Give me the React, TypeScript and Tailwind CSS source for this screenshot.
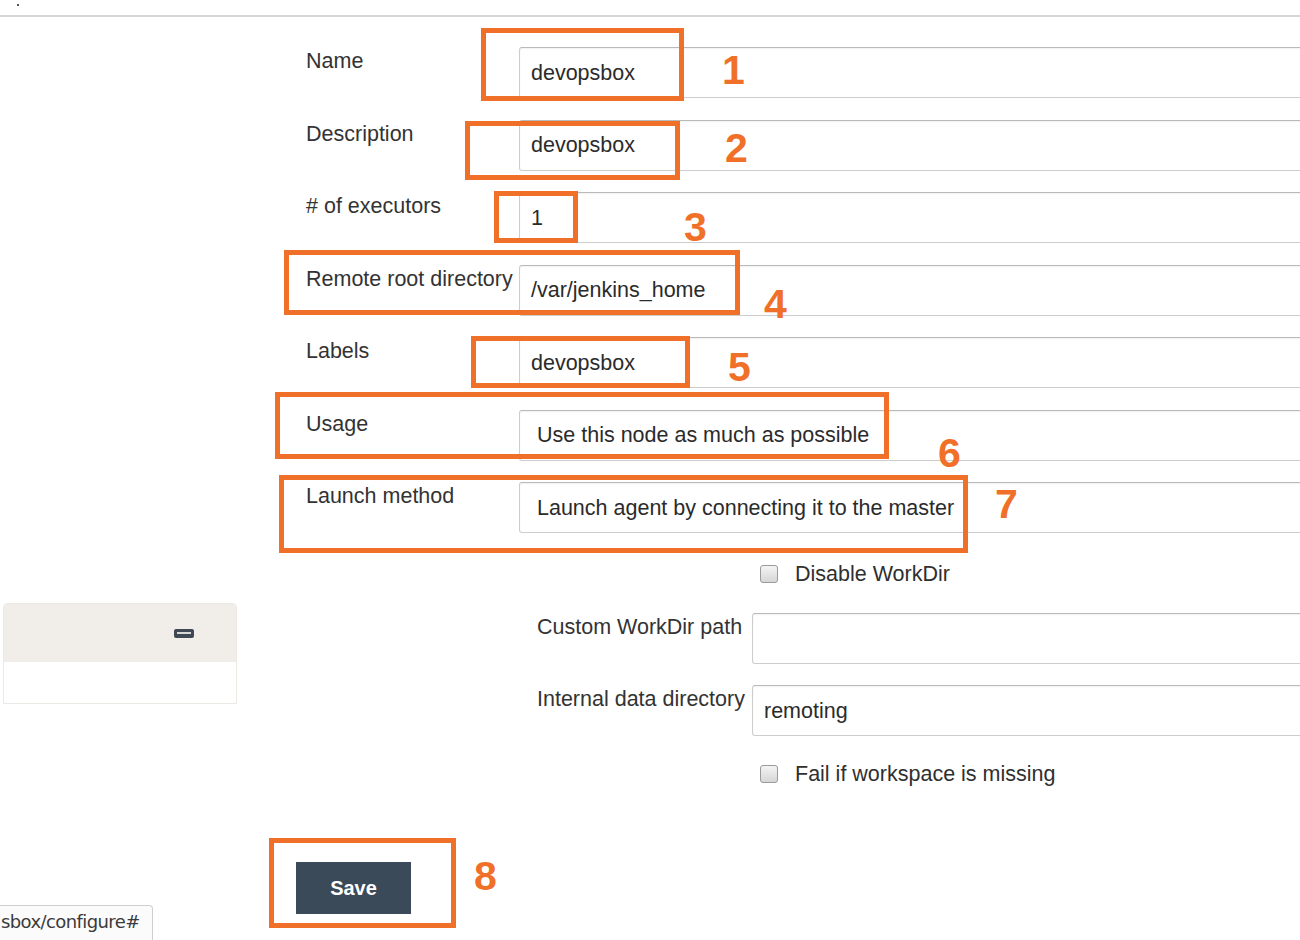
const FIELDS = [
  { label: "Name", value: "devopsbox" },
  { label: "Description", value: "devopsbox" },
  { label: "# of executors", value: "1" },
  { label: "Remote root directory", value: "/var/jenkins_home" },
  { label: "Labels", value: "devopsbox" },
  { label: "Usage", value: "Use this node as much as possible", select: true },
  { label: "Launch method", value: "Launch agent by connecting it to the master", select: true },
];

// annotation boxes drawn over the screenshot
const MARKS = [
  { n: "1", box: "left-[481px] top-[28px] w-[203px] h-[73px]", num: "left-[722px] top-[47px]" },
  { n: "2", box: "left-[465px] top-[121px] w-[215px] h-[59px]", num: "left-[725px] top-[125px]" },
  { n: "3", box: "left-[494px] top-[191px] w-[84px] h-[52px]", num: "left-[684px] top-[204px]" },
  { n: "4", box: "left-[284px] top-[250px] w-[456px] h-[65px]", num: "left-[764px] top-[281px]" },
  { n: "5", box: "left-[471px] top-[336px] w-[219px] h-[52px]", num: "left-[728px] top-[344px]" },
  { n: "6", box: "left-[275px] top-[392px] w-[614px] h-[67px]", num: "left-[938px] top-[430px]" },
  { n: "7", box: "left-[279px] top-[475px] w-[689px] h-[78px]", num: "left-[995px] top-[481px]" },
  { n: "8", box: "left-[269px] top-[838px] w-[187px] h-[90px]", num: "left-[474px] top-[853px]" },
];

function Field({ value, select }: { value: string; select?: boolean }) {
  return (
    <div
      className={
        "h-[51px] flex-1 flex items-center rounded-[3px] border border-[#cdcdcd] border-t-[#b9b9b9] bg-white shadow-[inset_0_1px_2px_rgba(0,0,0,0.06)] text-[#2b2b2b] " +
        (select ? "pl-[17px]" : "pl-[11px]")
      }
    >
      {value}
    </div>
  );
}

function Checkbox({ label }: { label: string }) {
  return (
    <div className="flex items-center gap-[17px] pl-[454px]">
      <div className="w-[18px] h-[18px] rounded-[3px] border border-[#9a9a9a] bg-gradient-to-b from-[#f4f4f4] to-[#d6d6d6]" />
      <span className="text-[#2f2f2f]">{label}</span>
    </div>
  );
}

export default function App() {
  return (
    <div className="relative w-[1300px] h-[940px] overflow-hidden bg-white font-['Liberation_Sans',Arial,sans-serif] text-[21.5px] leading-[24px] text-[#333]">
      {/* top edge of the captured page */}
      <div className="h-[17px] border-b-2 border-[#d6d6d6] relative">
        <div className="absolute left-[17px] top-[4px] w-[2px] h-[2px] bg-[#555]" />
      </div>

      <div className="flex w-[1330px]">
        {/* side panel */}
        <div className="w-[240px] pt-[586px] pl-[3px]">
          <div className="w-[234px] rounded-t-[4px] border border-[#ece9e4] overflow-hidden">
            <div className="h-[58px] bg-[#f1eeea] flex items-center justify-end pr-[42px]">
              <div className="w-[20px] h-[9px] rounded-[2px] bg-[#3e4955] flex items-center justify-center">
                <div className="w-[14px] h-[2px] bg-[#d8d8d8]" />
              </div>
            </div>
            <div className="h-[41px] bg-white" />
          </div>
        </div>

        {/* form */}
        <div className="flex-1 pt-[30px] pl-[66px]">
          <div className="flex flex-col gap-[21.5px]">
            {FIELDS.map((f) => (
              <div key={f.label} className="flex items-start">
                <div className="w-[213px] pt-[2px]">{f.label}</div>
                <Field value={f.value} select={f.select} />
              </div>
            ))}
          </div>

          <div className="mt-[29px] flex flex-col">
            <Checkbox label="Disable WorkDir" />
            <div className="mt-[27px] pl-[231px] flex items-start">
              <div className="w-[215px] pt-[2px]">Custom WorkDir path</div>
              <Field value="" />
            </div>
            <div className="mt-[21px] pl-[231px] flex items-start">
              <div className="w-[215px] pt-[2px]">Internal data directory</div>
              <Field value="remoting" />
            </div>
            <div className="mt-[26px]">
              <Checkbox label="Fail if workspace is missing" />
            </div>
          </div>

          <div className="mt-[76px] -ml-[10px]">
            <button className="w-[115px] h-[52px] bg-[#3b4a58] text-white font-bold text-[20px] font-['Liberation_Sans',Arial,sans-serif]">
              Save
            </button>
          </div>
        </div>
      </div>

      {/* browser status bubble */}
      <div className="absolute left-0 bottom-0 w-[153px] h-[35px] border border-l-0 border-b-0 border-[#cfcfcf] rounded-tr-[4px] bg-[#fbfbfb] overflow-hidden">
        <span className="block pl-[1px] pt-[5px] text-[18px] leading-[22px] text-[#3a3a3a] font-['DejaVu_Sans',sans-serif] whitespace-nowrap tracking-[-0.6px]">
          sbox/configure#
        </span>
      </div>

      {/* orange annotations */}
      {MARKS.map((m) => (
        <div key={m.n}>
          <div className={"absolute border-[5px] border-[#f0702a] " + m.box} />
          <div className={"absolute text-[41px] leading-[46px] font-bold text-[#f0702a] font-['Liberation_Sans',Arial,sans-serif] " + m.num}>
            {m.n}
          </div>
        </div>
      ))}
    </div>
  );
}
